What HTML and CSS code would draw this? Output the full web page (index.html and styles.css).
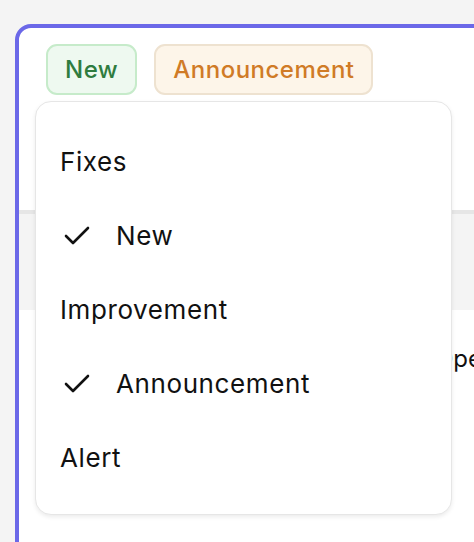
FILE: index.html
```html
<!DOCTYPE html>
<html>
<head>
<meta charset="utf-8">
<link rel="stylesheet" href="styles.css">
</head>
<body>
<div class="card">
  <div class="badges">
    <span class="badge badge-new">New</span>
    <span class="badge badge-ann">Announcement</span>
  </div>
  <div class="table">
    <div class="thead">
      <span class="th">Title</span>
      <span class="th th-second">Created</span>
    </div>
    <div class="trow">
      <span class="td">Planned maintenance</span>
      <span class="td td-second">Open</span>
    </div>
  </div>
  <div class="menu">
    <div class="item">Fixes</div>
    <div class="item item-checked"><svg class="check" viewBox="0 0 26 19" width="26" height="19"><polyline points="2,10 9,17 24,2" fill="none" stroke="#111" stroke-width="2.6" stroke-linecap="round" stroke-linejoin="round"/></svg><span>New</span></div>
    <div class="item">Improvement</div>
    <div class="item item-checked"><svg class="check" viewBox="0 0 26 19" width="26" height="19"><polyline points="2,10 9,17 24,2" fill="none" stroke="#111" stroke-width="2.6" stroke-linecap="round" stroke-linejoin="round"/></svg><span>Announcement</span></div>
    <div class="item">Alert</div>
  </div>
</div>
</body>
</html>
```
FILE: styles.css
```css
html, body {
  margin: 0;
  padding: 0;
}
body {
  background: #f4f4f4;
  font-family: Inter, "Liberation Sans", sans-serif;
  overflow: hidden;
  width: 474px;
  height: 542px;
}
.card {
  position: relative;
  margin: 24px 0 0 15px;
  width: 640px;
  height: 700px;
  background: #ffffff;
  border: 4px solid #6b68e8;
  border-radius: 16px;
  box-sizing: border-box;
}
.badges {
  display: flex;
  gap: 17px;
  padding: 16px 0 0 27px;
}
.badge {
  display: inline-flex;
  align-items: center;
  height: 51px;
  box-sizing: border-box;
  padding: 0 17px;
  font-size: 24px;
  letter-spacing: 0.5px;
  font-weight: 500;
  border-radius: 11px;
  border: 2px solid;
}
.badge-new {
  background: #eef9f0;
  border-color: #c6ebca;
  color: #2f7c3f;
}
.badge-ann {
  background: #fdf5e9;
  border-color: #eee2d0;
  color: #d07b26;
}
.table {
  margin-top: 115px;
}
.thead {
  display: grid;
  grid-template-columns: 451px 1fr;
  align-items: center;
  height: 100px;
  box-sizing: border-box;
  border-top: 4px solid #e6e6e6;
  background: #f4f4f4;
  font-size: 18px;
  color: #333;
}
.th {
  padding-left: 24px;
  white-space: nowrap;
}
.th-second {
  padding-left: 19px;
}
.trow {
  display: grid;
  grid-template-columns: 416px 1fr;
  padding-top: 34px;
  font-size: 24px;
  color: #111;
}
.td {
  padding-left: 24px;
  white-space: nowrap;
}
.td-second {
  padding-left: 0;
}
.menu {
  position: absolute;
  left: 16px;
  top: 73px;
  width: 417px;
  height: 414px;
  box-sizing: border-box;
  padding: 22px 0;
  background: #ffffff;
  border: 1px solid #e6e6e6;
  border-radius: 16px;
  box-shadow: 0 2px 4px rgba(0, 0, 0, 0.08);
}
.item {
  display: flex;
  align-items: center;
  height: 74px;
  padding-left: 24px;
  font-size: 26px;
  letter-spacing: 0.6px;
  color: #111;
}
.check {
  margin-left: 4px;
  margin-right: 26px;
  flex: none;
}
```
